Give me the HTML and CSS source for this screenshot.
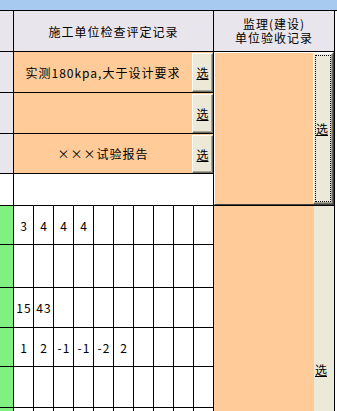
FILE: index.html
```html
<!DOCTYPE html>
<html lang="zh-CN">
<head>
  <meta charset="UTF-8">
  <title>检验批质量验收记录</title>
  <link rel="stylesheet" href="styles.css">
</head>
<body>
  <div class="titlebar"></div>
  <div class="sheet">
    <div class="side"></div>
    <div class="head">施工单位检查评定记录</div>
    <div class="head head-right"><span>监理(建设)</span><span>单位验收记录</span></div>

    <div class="side"></div>
    <div class="item"><span class="item-text">实测180kpa,大于设计要求</span><button class="pick">选</button></div>
    <div class="panel panel-top">
      <button class="pick pick-tall focused"><span>选</span></button>
    </div>

    <div class="side"></div>
    <div class="item"><span class="item-text"></span><button class="pick">选</button></div>

    <div class="side"></div>
    <div class="item"><span class="item-text">×××试验报告</span><button class="pick">选</button></div>

    <div class="side side-white"></div>
    <div class="blank"></div>

    <div class="panel panel-bottom">
      <button class="pick pick-tall pick-low"><span>选</span></button>
    </div>

    <div class="side side-green"></div>
    <div class="num">3</div><div class="num">4</div><div class="num">4</div><div class="num">4</div><div class="num"></div>
    <div class="num"></div><div class="num"></div><div class="num"></div><div class="num"></div><div class="num"></div>

    <div class="side side-green"></div>
    <div class="num"></div><div class="num"></div><div class="num"></div><div class="num"></div><div class="num"></div>
    <div class="num"></div><div class="num"></div><div class="num"></div><div class="num"></div><div class="num"></div>

    <div class="side side-green"></div>
    <div class="num">15</div><div class="num">43</div><div class="num"></div><div class="num"></div><div class="num"></div>
    <div class="num"></div><div class="num"></div><div class="num"></div><div class="num"></div><div class="num"></div>

    <div class="side side-green"></div>
    <div class="num">1</div><div class="num">2</div><div class="num">-1</div><div class="num">-1</div><div class="num">-2</div>
    <div class="num">2</div><div class="num"></div><div class="num"></div><div class="num"></div><div class="num"></div>

    <div class="side side-green"></div>
    <div class="num"></div><div class="num"></div><div class="num"></div><div class="num"></div><div class="num"></div>
    <div class="num"></div><div class="num"></div><div class="num"></div><div class="num"></div><div class="num"></div>

    <div class="side side-green"></div>
    <div class="num"></div><div class="num"></div><div class="num"></div><div class="num"></div><div class="num"></div>
    <div class="num"></div><div class="num"></div><div class="num"></div><div class="num"></div><div class="num"></div>
  </div>
</body>
</html>
```

FILE: styles.css
```css
body {
  margin: 0;
  font-family: "Noto Sans CJK SC", "Liberation Sans", sans-serif;
  font-size: 12px;
  color: #000;
  background: #fff;
  overflow: hidden;
}
.titlebar {
  height: 10px;
  background: #a6caf0;
  border-bottom: 1px solid #000;
}
.sheet {
  width: 334px;
  padding-right: 1px;
  display: grid;
  grid-template-columns: 13px repeat(10, 19px) 120px;
  grid-template-rows: 40px 40px 40px 39px 31px 38px 42px 39px 38px 40px 40px;
  gap: 1px;
  background: #000;
}
.side {
  background: #e8e6ec;
}
.side-white {
  background: #fff;
}
.side-green {
  background: #80f080;
}
.head {
  grid-column: 2 / 12;
  background: #e8e6ec;
  display: flex;
  align-items: center;
  justify-content: center;
  letter-spacing: 1px;
}
.head-right {
  grid-column: 12;
  flex-direction: column;
  line-height: 14px;
}
.item {
  grid-column: 2 / 12;
  background: #ffcc99;
  display: flex;
}
.item-text {
  flex: 1;
  display: flex;
  align-items: center;
  justify-content: center;
  letter-spacing: 1px;
}
.blank {
  grid-column: 2 / 12;
  background: #fff;
}
.num {
  background: #fff;
  display: flex;
  align-items: center;
  justify-content: center;
  letter-spacing: 1px;
  padding-left: 1px;
}
.pick {
  width: 21px;
  margin: 1px 0 0;
  padding: 0;
  font: inherit;
  color: #000;
  text-decoration: underline;
  background: #ece9d8;
  border: 1px solid;
  border-color: #fff #716f64 #716f64 #fff;
  box-shadow: inset -1px -1px #aca899;
}
.panel {
  grid-column: 12;
  background: #ffcc99;
  display: flex;
  justify-content: flex-end;
}
.panel-top {
  grid-row: 2 / 6;
  border: 1px solid;
  border-color: #fff #404040 #404040 #fff;
}
.panel-bottom {
  grid-row: 6 / 12;
}
.pick-tall {
  width: 20px;
  margin: 0;
  display: flex;
  align-items: center;
  padding: 0;
}
.pick-tall.focused span {
  flex: 1;
  align-self: stretch;
  display: flex;
  align-items: center;
  margin: 1px;
  border: 1px dotted #000;
}
.pick-low {
  align-items: flex-start;
  padding-top: 154px;
  border-color: #ece9d8;
  box-shadow: none;
}
```
